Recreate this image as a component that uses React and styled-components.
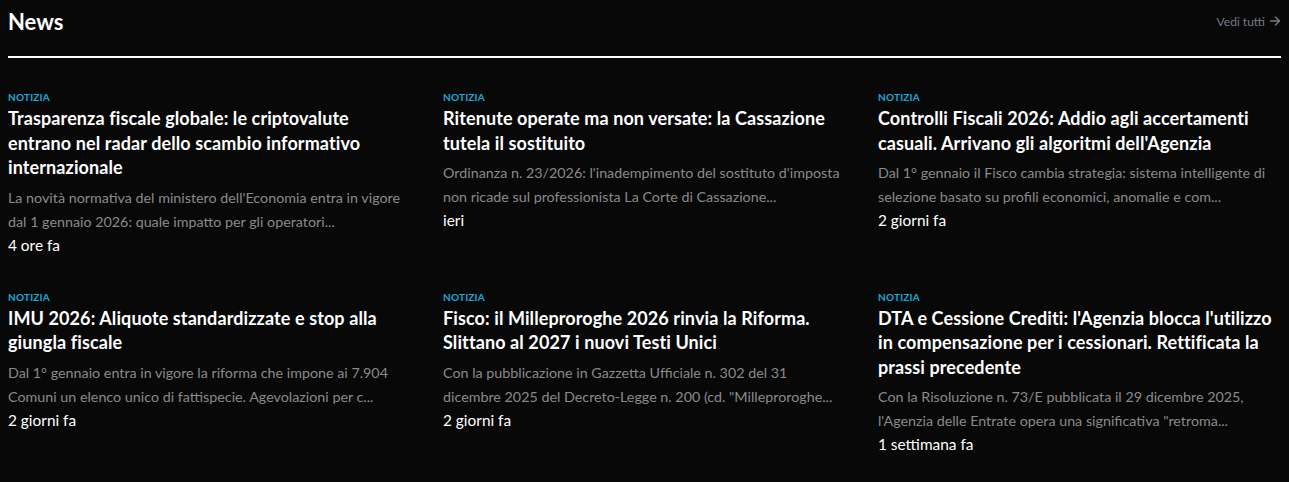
import React from "react";
import styled, { createGlobalStyle } from "styled-components";

const Global = createGlobalStyle`
  html, body {
    margin: 0;
    background: #080808;
  }
  body {
    padding: 8px;
    font-family: Lato, "Noto Sans", "Liberation Sans", sans-serif;
    color: #fff;
  }
`;

const Section = styled.section`
  display: flex;
  flex-direction: column;
`;

const Header = styled.header`
  display: flex;
  align-items: center;
  justify-content: space-between;
  height: 26px;
  padding-bottom: 22px;
  border-bottom: 2px solid #fff;
`;

const Title = styled.h2`
  margin: 0;
  font-size: 22px;
  font-weight: 700;
`;

const SeeAll = styled.a`
  display: inline-flex;
  align-items: center;
  gap: 4px;
  font-size: 12px;
  color: #767b87;
  text-decoration: none;
`;

const Grid = styled.div`
  display: grid;
  grid-template-columns: repeat(3, 1fr);
  column-gap: 32px;
  row-gap: 35px;
  padding-top: 33px;
`;

const Card = styled.article`
  display: flex;
  flex-direction: column;
`;

const Tag = styled.span`
  font-size: 10px;
  font-weight: 700;
  color: #1aa9d6;
  letter-spacing: 0.2px;
  line-height: 12px;
`;

const Headline = styled.h3`
  margin: 3px 0 0;
  font-size: 18px;
  font-weight: 700;
  line-height: 24.5px;
  letter-spacing: 0.1px;
`;

const Excerpt = styled.p`
  margin: 6px 0 0;
  font-size: 14.3px;
  line-height: 24px;
  color: #8a8a8a;
`;

const When = styled.span`
  font-size: 15.4px;
  line-height: 22px;
  color: #fff;
`;

const news = [
  {
    title: "Trasparenza fiscale globale: le criptovalute entrano nel radar dello scambio informativo internazionale",
    text: "La novità normativa del ministero dell'Economia entra in vigore dal 1 gennaio 2026: quale impatto per gli operatori...",
    when: "4 ore fa",
  },
  {
    title: "Ritenute operate ma non versate: la Cassazione tutela il sostituito",
    text: "Ordinanza n. 23/2026: l'inadempimento del sostituto d'imposta non ricade sul professionista La Corte di Cassazione...",
    when: "ieri",
  },
  {
    title: "Controlli Fiscali 2026: Addio agli accertamenti casuali. Arrivano gli algoritmi dell'Agenzia",
    text: "Dal 1° gennaio il Fisco cambia strategia: sistema intelligente di selezione basato su profili economici, anomalie e com...",
    when: "2 giorni fa",
  },
  {
    title: "IMU 2026: Aliquote standardizzate e stop alla giungla fiscale",
    text: "Dal 1° gennaio entra in vigore la riforma che impone ai 7.904 Comuni un elenco unico di fattispecie. Agevolazioni per c...",
    when: "2 giorni fa",
  },
  {
    title: "Fisco: il Milleproroghe 2026 rinvia la Riforma. Slittano al 2027 i nuovi Testi Unici",
    text: "Con la pubblicazione in Gazzetta Ufficiale n. 302 del 31 dicembre 2025 del Decreto-Legge n. 200 (cd. \"Milleproroghe...",
    when: "2 giorni fa",
  },
  {
    title: "DTA e Cessione Crediti: l'Agenzia blocca l'utilizzo in compensazione per i cessionari. Rettificata la prassi precedente",
    text: "Con la Risoluzione n. 73/E pubblicata il 29 dicembre 2025, l'Agenzia delle Entrate opera una significativa \"retroma...",
    when: "1 settimana fa",
  },
];

const Arrow = () => (
  <svg width="12" height="12" viewBox="0 0 12 12" fill="none" stroke="currentColor" strokeWidth="1.3" strokeLinecap="round" strokeLinejoin="round">
    <path d="M1.5 6h9M6.5 2l4 4-4 4" />
  </svg>
);

export default function App() {
  return (
    <>
      <Global />
      <Section>
        <Header>
          <Title>News</Title>
          <SeeAll href="#">
            Vedi tutti <Arrow />
          </SeeAll>
        </Header>
        <Grid>
          {news.map((n) => (
            <Card key={n.title}>
              <Tag>NOTIZIA</Tag>
              <Headline>{n.title}</Headline>
              <Excerpt>{n.text}</Excerpt>
              <When>{n.when}</When>
            </Card>
          ))}
        </Grid>
      </Section>
    </>
  );
}
